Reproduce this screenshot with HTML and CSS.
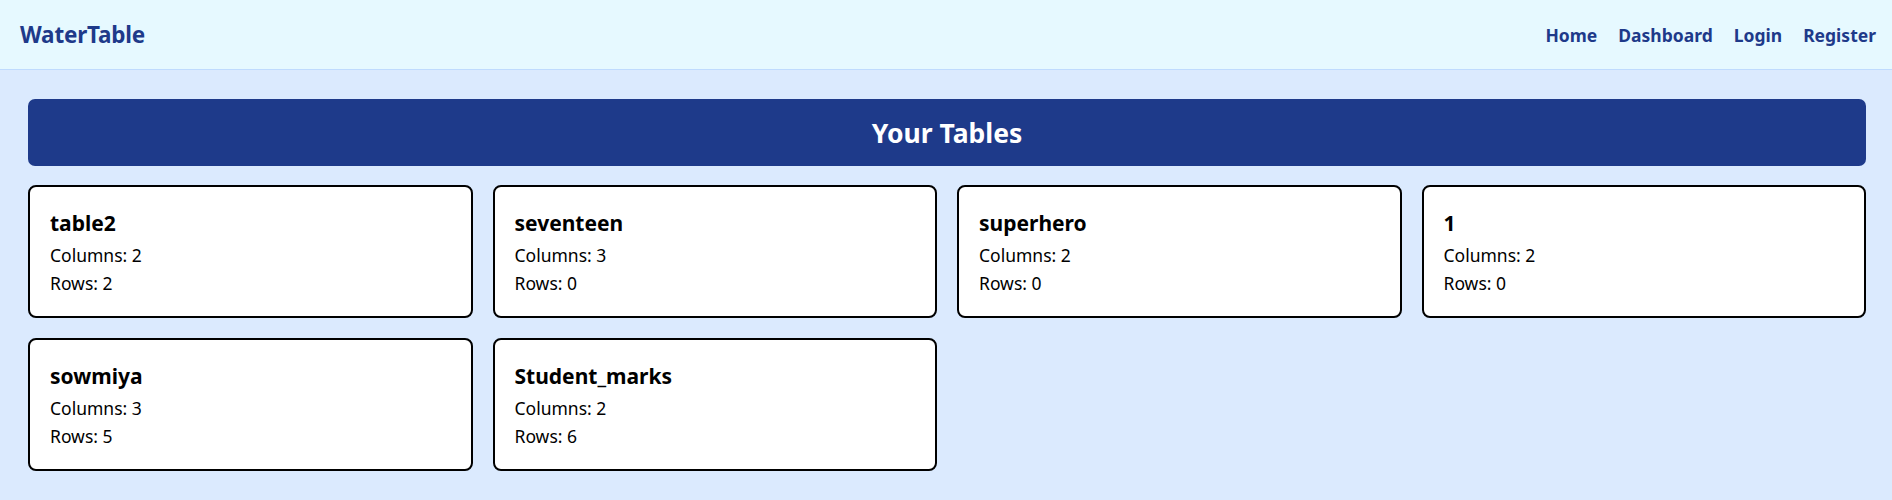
FILE: index.html
```html
<!DOCTYPE html>
<html lang="en">
<head>
<meta charset="utf-8">
<title>WaterTable</title>
<link rel="stylesheet" href="styles.css">
</head>
<body>
<header class="topbar">
  <a class="brand" href="#">WaterTable</a>
  <nav class="nav">
    <a href="#">Home</a>
    <a href="#">Dashboard</a>
    <a href="#">Login</a>
    <a href="#">Register</a>
  </nav>
</header>
<main class="main">
  <h1 class="banner">Your Tables</h1>
  <div class="grid">
    <div class="card"><h2>table2</h2><p>Columns: 2</p><p>Rows: 2</p></div>
    <div class="card"><h2>seventeen</h2><p>Columns: 3</p><p>Rows: 0</p></div>
    <div class="card"><h2>superhero</h2><p>Columns: 2</p><p>Rows: 0</p></div>
    <div class="card"><h2>1</h2><p>Columns: 2</p><p>Rows: 0</p></div>
    <div class="card"><h2>sowmiya</h2><p>Columns: 3</p><p>Rows: 5</p></div>
    <div class="card"><h2>Student_marks</h2><p>Columns: 2</p><p>Rows: 6</p></div>
  </div>
</main>
</body>
</html>
```
FILE: styles.css
```css
* { box-sizing: border-box; }
html, body { margin: 0; padding: 0; }
body {
  background: #dbeafe;
  font-family: "Noto Sans", "Open Sans", sans-serif;
  color: #000;
}
a { text-decoration: none; }
.topbar {
  height: 70px;
  background: #e6f9ff;
  border-bottom: 1px solid #bfdbfe;
  display: flex;
  align-items: center;
  justify-content: space-between;
  padding: 0 16px 0 20px;
}
.brand {
  color: #1e3a8a;
  font-weight: 700;
  font-size: 22.5px;
  letter-spacing: -0.2px;
}
.nav {
  display: flex;
  gap: 21px;
}
.nav a {
  color: #1e3a8a;
  font-weight: 700;
  font-size: 17.5px;
}
.main {
  padding: 29px 26px 0 28px;
}
.banner {
  margin: 0 0 19px;
  height: 67px;
  background: #1e3a8a;
  border-radius: 7px;
  color: #fff;
  font-size: 26.5px;
  font-weight: 700;
  display: flex;
  align-items: center;
  justify-content: center;
}
.grid {
  display: grid;
  grid-template-columns: repeat(4, 1fr);
  gap: 20px;
}
.card {
  background: #fff;
  border: 2px solid #000;
  border-radius: 8px;
  height: 133px;
  padding: 21px 20px 18px;
}
.card h2 {
  margin: 0 0 3px;
  font-size: 21px;
  line-height: 30px;
  font-weight: 700;
}
.card p {
  margin: 0;
  font-size: 17.5px;
  line-height: 28px;
}
```
